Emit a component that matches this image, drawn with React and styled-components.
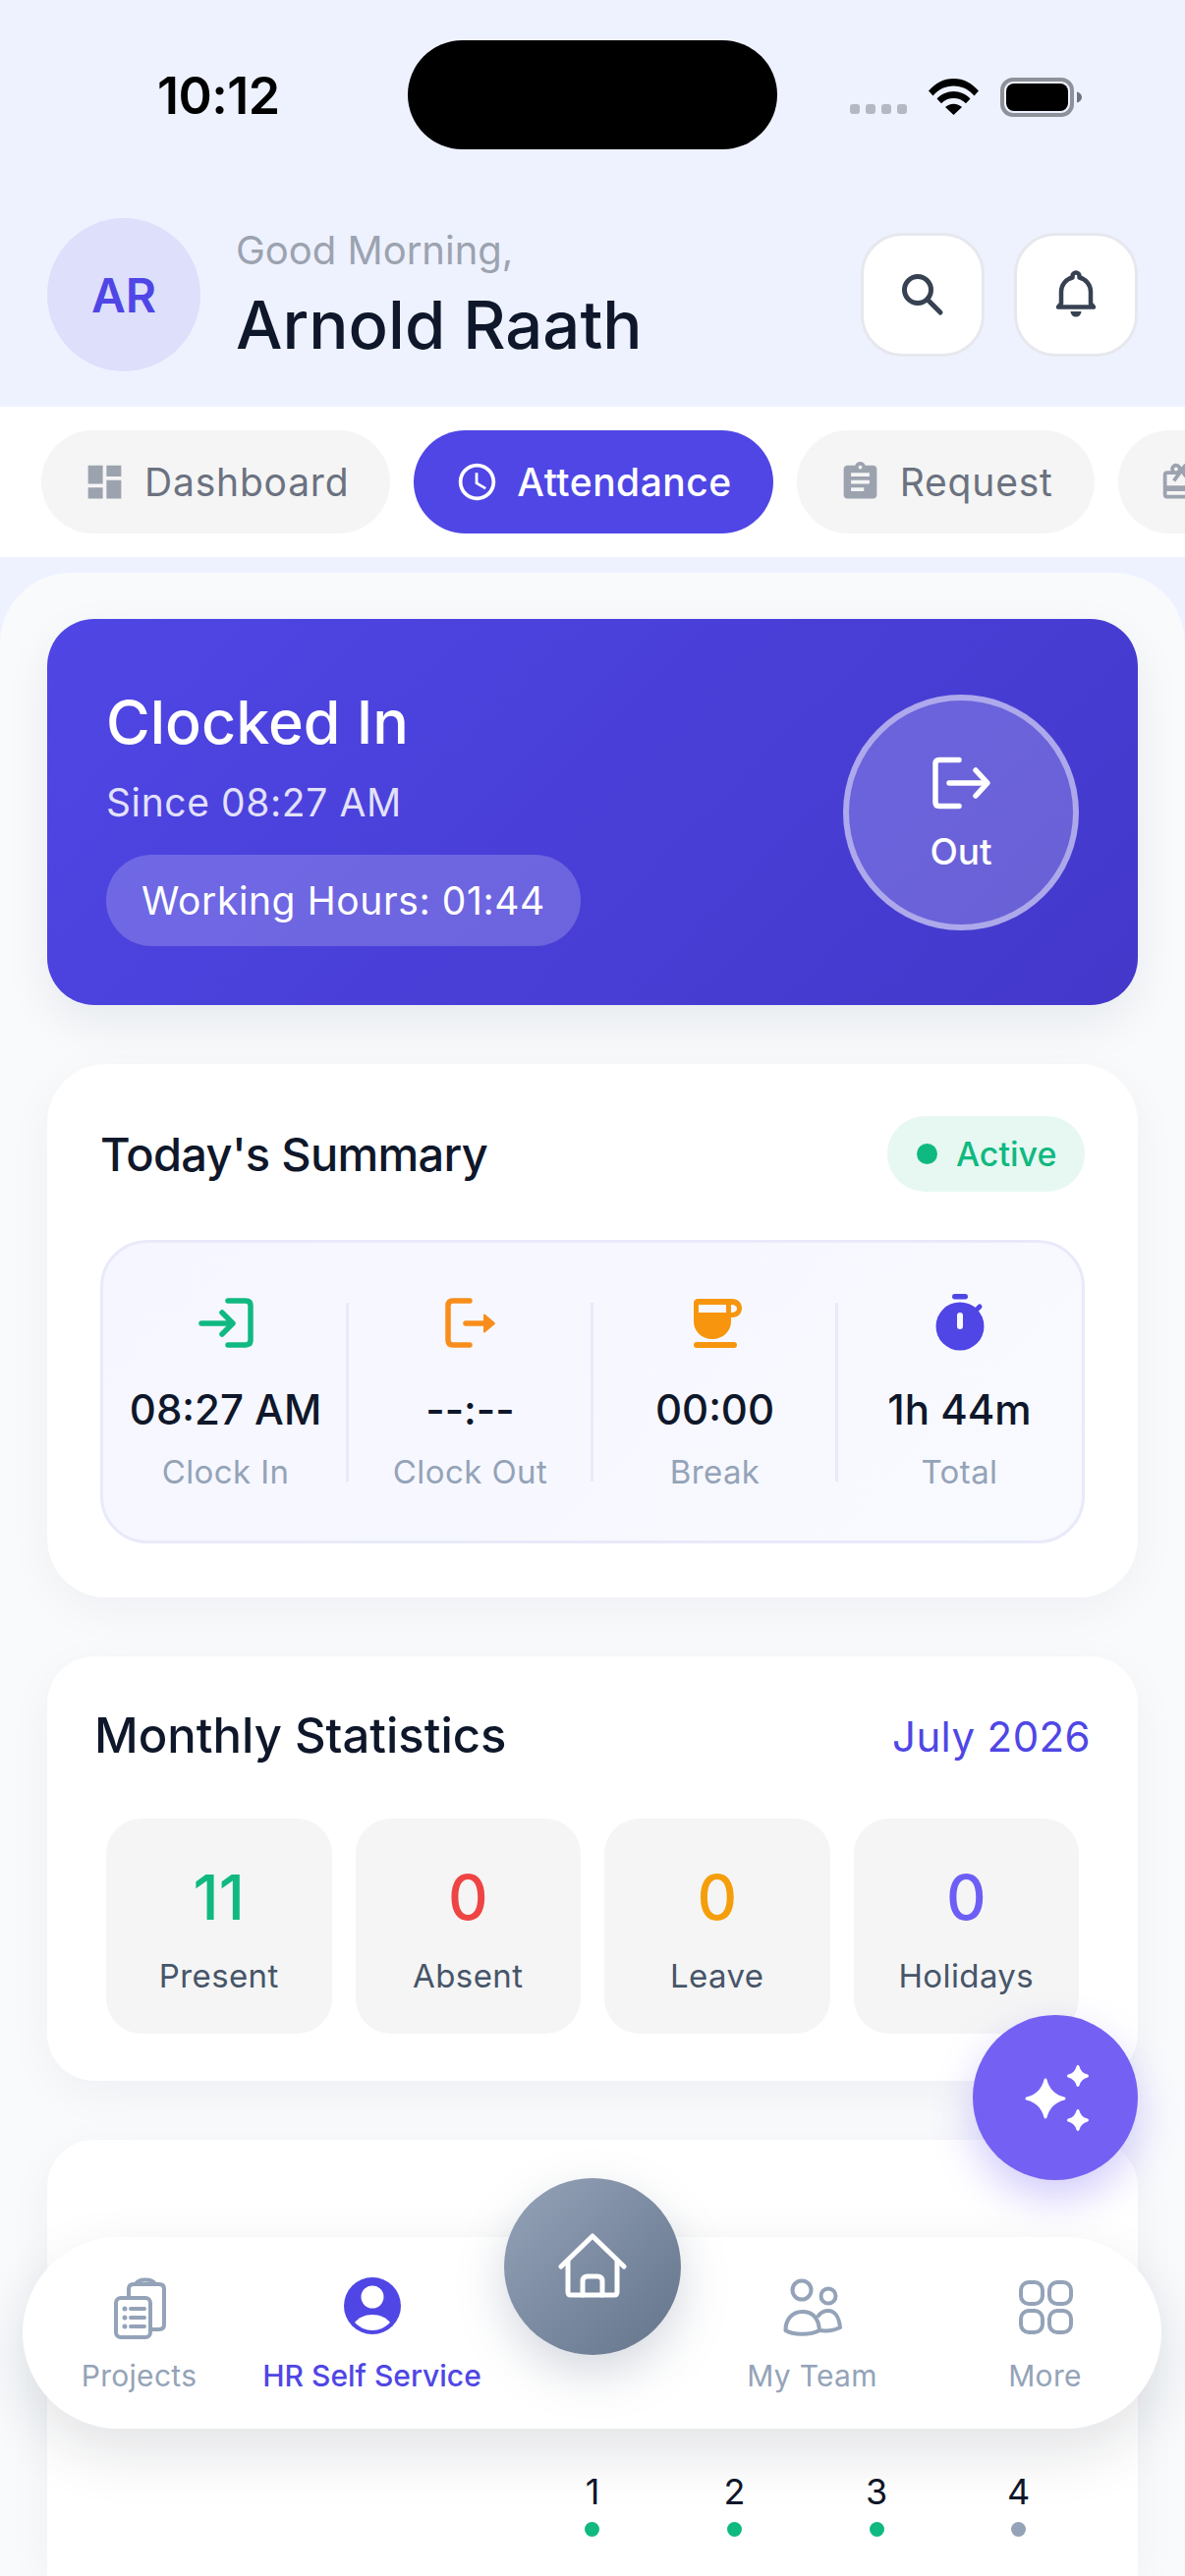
import React from "react";
import styled, { createGlobalStyle } from "styled-components";
import { MdDashboard, MdAccessTime, MdAssignment, MdCardGiftcard } from "react-icons/md";

const Global = createGlobalStyle`
  html, body { margin: 0; padding: 0; background: #eef2ff; }
  body { font-family: Inter, "Noto Sans", sans-serif; }
  * { box-sizing: border-box; }
`;

const Page = styled.div`
  position: relative;
  width: 1206px;
  height: 2622px;
  overflow: hidden;
  background: #eef2ff;
  display: flex;
  flex-direction: column;
`;

const StatusBar = styled.div`
  height: 222px;
  display: grid;
  grid-template-columns: 415px 376px 1fr;
  padding-top: 41px;
`;
const Time = styled.div`
  font-size: 52px;
  font-weight: 600;
  line-height: 58px;
  padding: 28px 0 0 160px;
  color: #000;
  letter-spacing: -0.5px;
`;
const Island = styled.div`
  height: 111px;
  border-radius: 56px;
  background: #000;
`;
const StatusIcons = styled.div`
  display: flex;
  align-items: flex-start;
  padding: 38px 0 0 74px;
`;
const SignalDots = styled.div`
  display: flex;
  gap: 6px;
  margin: 27px 22px 0 0;
`;
const SignalDot = styled.span`
  width: 10px;
  height: 10px;
  border-radius: 3px;
  background: #b4b8c2;
`;

const Header = styled.header`
  display: flex;
  align-items: center;
  padding: 0 48px 36px;
  height: 192px;
`;
const Avatar = styled.div`
  width: 156px;
  height: 156px;
  border-radius: 50%;
  background: #dddffb;
  color: #4f46e5;
  font-size: 48px;
  font-weight: 600;
  display: flex;
  align-items: center;
  justify-content: center;
  flex-shrink: 0;
`;
const Greeting = styled.div`
  margin-left: 36px;
  flex: 1;
`;
const Hello = styled.div`
  font-size: 40px;
  line-height: 50px;
  color: #9ca3af;
`;
const Name = styled.div`
  font-size: 67px;
  line-height: 80px;
  font-weight: 500;
  color: #0f172a;
  margin-top: 11px;
`;
const HeaderActions = styled.div`
  display: flex;
  gap: 30px;
`;
const RoundButton = styled.div`
  width: 126px;
  height: 126px;
  border-radius: 42px;
  background: #fff;
  border: 3px solid #e7e8ee;
  display: flex;
  align-items: center;
  justify-content: center;
`;

const TabBar = styled.nav`
  height: 153px;
  background: #fff;
  display: flex;
  gap: 24px;
  padding: 24px 0 24px 42px;
  overflow: hidden;
`;
const Tab = styled.div`
  height: 105px;
  flex-shrink: 0;
  border-radius: 53px;
  padding: 0 42px;
  display: flex;
  align-items: center;
  gap: 18px;
  font-size: 39px;
  letter-spacing: ${(p) => (p.$active ? "0.5px" : "0.8px")};
  min-width: ${(p) => (p.$stub ? "200px" : "0")};
  background: ${(p) => (p.$active ? "#4f46e5" : "#f5f5f5")};
  color: ${(p) => (p.$active ? "#fff" : "#6b7280")};
  font-weight: ${(p) => (p.$active ? 500 : 400)};
  svg { color: ${(p) => (p.$active ? "#fff" : "#9ca3af")}; flex-shrink: 0; }
`;

const Panel = styled.main`
  margin-top: 16px;
  flex: 1;
  background: #f8fafc;
  border-radius: 72px 72px 0 0;
  padding: 47px 48px 0;
  display: flex;
  flex-direction: column;
  gap: 60px;
`;
const Hero = styled.section`
  height: 393px;
  flex-shrink: 0;
  border-radius: 48px;
  background: linear-gradient(135deg, #4f46e5, #4338ca);
  box-shadow: 0 18px 48px rgba(15, 23, 42, 0.07);
  display: flex;
  align-items: center;
  justify-content: space-between;
  padding: 0 60px;
  color: #fff;
`;
const HeroText = styled.div`
  padding-top: 9px;
`;
const HeroTitle = styled.div`
  font-size: 61px;
  line-height: 72px;
  font-weight: 500;
`;
const HeroSince = styled.div`
  font-size: 39px;
  line-height: 48px;
  margin-top: 22px;
  color: rgba(255, 255, 255, 0.85);
  letter-spacing: 0.6px;
`;
const HoursPill = styled.div`
  display: inline-flex;
  align-items: center;
  height: 93px;
  margin-top: 29px;
  padding: 0 36px;
  border-radius: 47px;
  background: rgba(255, 255, 255, 0.2);
  font-size: 39px;
  letter-spacing: 0.6px;
`;
const OutButton = styled.div`
  width: 240px;
  height: 240px;
  border-radius: 50%;
  background: rgba(255, 255, 255, 0.2);
  border: 6px solid rgba(255, 255, 255, 0.45);
  display: flex;
  flex-direction: column;
  align-items: center;
  justify-content: center;
  gap: 18px;
  padding-top: 3px;
  font-size: 37px;
  font-weight: 500;
  line-height: 44px;
`;

const Card = styled.section`
  flex-shrink: 0;
  background: #fff;
  box-shadow: 0 12px 48px rgba(15, 23, 42, 0.045);
`;
const SummaryCard = styled(Card)`
  height: 543px;
  border-radius: 60px;
  padding: 53px 54px 0;
`;
const CardHead = styled.div`
  display: flex;
  align-items: center;
  justify-content: space-between;
`;
const SummaryTitle = styled.h2`
  margin: 0;
  font-size: 47px;
  letter-spacing: -0.7px;
  font-weight: 500;
  color: #0f172a;
`;
const ActivePill = styled.div`
  height: 77px;
  width: 201px;
  padding-left: 30px;
  border-radius: 39px;
  background: #e6f8f1;
  color: #10b981;
  display: flex;
  align-items: center;
  gap: 19px;
  font-size: 34px;
  font-weight: 500;
`;
const ActiveDot = styled.span`
  width: 21px;
  height: 21px;
  border-radius: 50%;
  background: #10b981;
`;
const SummaryPanel = styled.div`
  margin-top: 49px;
  height: 309px;
  border: 3px solid #e8eafa;
  border-radius: 48px;
  background: linear-gradient(135deg, #f5f6ff, #f9faff);
  display: grid;
  grid-template-columns: repeat(4, 1fr);
  padding-top: 52px;
`;
const SummaryCell = styled.div`
  position: relative;
  display: flex;
  flex-direction: column;
  align-items: center;
  height: 191px;
  &:not(:last-child)::after {
    content: "";
    position: absolute;
    right: -1px;
    top: 9px;
    bottom: 0;
    width: 3px;
    background: #e8eafa;
  }
`;
const SummaryValue = styled.div`
  margin-top: 32px;
  font-size: 42px;
  line-height: 52px;
  font-weight: 500;
  color: #0f172a;
`;
const SummaryLabel = styled.div`
  margin-top: 17px;
  font-size: 33px;
  line-height: 40px;
  color: #94a3b8;
  letter-spacing: 0.4px;
`;

const MonthlyCard = styled(Card)`
  height: 432px;
  border-radius: 48px;
  padding: 48px 48px 0 48px;
`;
const MonthlyTitle = styled.h2`
  margin: 0;
  font-size: 49px;
  line-height: 66px;
  font-weight: 500;
  color: #0f172a;
`;
const MonthLabel = styled.div`
  font-size: 42px;
  color: #4f46e5;
  letter-spacing: 0.4px;
`;
const TileGrid = styled.div`
  display: grid;
  grid-template-columns: repeat(4, 1fr);
  gap: 24px;
  margin: 51px 12px 0 12px;
`;
const Tile = styled.div`
  height: 219px;
  border-radius: 36px;
  background: #f5f5f5;
  display: flex;
  flex-direction: column;
  align-items: center;
  padding-top: 45px;
`;
const TileValue = styled.div`
  font-size: 63px;
  line-height: 70px;
  font-weight: 500;
  color: ${(p) => p.$color};
`;
const TileLabel = styled.div`
  margin-top: 25px;
  font-size: 33px;
  line-height: 40px;
  color: #475569;
  letter-spacing: 0.4px;
`;

const CalendarCard = styled(Card)`
  flex: 1;
  border-radius: 48px 48px 0 0;
  padding: 336px 49px 0;
`;
const CalendarGrid = styled.div`
  display: grid;
  grid-template-columns: repeat(7, 1fr);
`;
const Day = styled.div`
  display: flex;
  flex-direction: column;
  align-items: center;
  font-size: 36px;
  line-height: 44px;
  color: #0f172a;
`;
const DayDot = styled.span`
  width: 15px;
  height: 15px;
  margin-top: 9px;
  border-radius: 50%;
  background: ${(p) => p.$color};
`;

const BottomNav = styled.nav`
  position: absolute;
  left: 23px;
  bottom: 150px;
  width: 1159px;
  height: 195px;
  border-radius: 98px;
  background: #fff;
  box-shadow: 0 24px 60px rgba(15, 23, 42, 0.12);
  display: grid;
  grid-template-columns: 237px 237px 211px 237px 237px;
  padding-top: 40px;
`;
const NavItem = styled.div`
  display: flex;
  flex-direction: column;
  align-items: center;
  gap: 17px;
  font-size: 30px;
  line-height: 36px;
  letter-spacing: ${(p) => (p.$active ? "0" : "0.3px")};
  font-weight: ${(p) => (p.$active ? 500 : 400)};
  color: ${(p) => (p.$active ? "#4f46e5" : "#94a3b8")};
`;
const NavIcon = styled.svg`
  display: block;
  width: 60px;
  height: 66px;
  fill: none;
  stroke: currentColor;
  stroke-width: 4;
  stroke-linecap: round;
  stroke-linejoin: round;
`;
const HomeButton = styled.div`
  position: absolute;
  left: 490px;
  top: -60px;
  width: 180px;
  height: 180px;
  border-radius: 50%;
  background: linear-gradient(135deg, #94a3b8, #64748b);
  box-shadow: 0 18px 48px rgba(100, 116, 139, 0.28);
  display: flex;
  align-items: center;
  justify-content: center;
`;
const Fab = styled.div`
  position: absolute;
  right: 48px;
  bottom: 403px;
  width: 168px;
  height: 168px;
  border-radius: 50%;
  background: #7461f3;
  box-shadow: 0 18px 42px rgba(116, 97, 243, 0.32);
  display: flex;
  align-items: center;
  justify-content: center;
`;

const SvgIcon = styled.svg`
  display: block;
  flex-shrink: 0;
`;

const star = (x, y, r) => {
  const k = r * 0.2;
  return `M${x} ${y - r}Q${x + k} ${y - k} ${x + r} ${y}Q${x + k} ${y + k} ${x} ${y + r}Q${x - k} ${y + k} ${x - r} ${y}Q${x - k} ${y - k} ${x} ${y - r}Z`;
};

const Stroke = { fill: "none", strokeLinecap: "round", strokeLinejoin: "round" };

const Wifi = () => (
  <SvgIcon width="51" height="38" viewBox="0 0 51 38">
    <path d="M0 13.5C7 5.5 15.5 1 25.5 1S44 5.5 51 13.5l-4.5 5C41 12 34 8.5 25.5 8.5S10 12 4.500 18.500Z" fill="#000" />
    <path d="M8.500 21.500C13 16.800 19 14 25.500 14s12.500 2.800 17 7.500l-4.500 4.800c-3.400-3.300-7.600-5.200-12.500-5.200s-9.100 1.900-12.500 5.200Z" fill="#000" />
    <path d="M17 30c2.200-2 5.200-3.300 8.500-3.300s6.300 1.300 8.500 3.300L25.500 38Z" fill="#000" />
  </SvgIcon>
);
const BatterySvg = styled(SvgIcon)`
  margin-left: 22px;
`;
const Battery = () => (
  <BatterySvg width="84" height="40" viewBox="0 0 84 40">
    <rect x="2" y="2" width="71" height="36" rx="11" fill="none" stroke="#8e9199" strokeWidth="4" />
    <rect x="6" y="6" width="63" height="28" rx="8" fill="#000" />
    <path d="M78 14.500c3 .5 5 3 5 5.500s-2 5-5 5.500Z" fill="#6b7280" />
  </BatterySvg>
);
const SearchIcon = () => (
  <SvgIcon width="48" height="48" viewBox="0 0 48 48" {...Stroke} stroke="#374151" strokeWidth="5">
    <circle cx="19" cy="19" r="13.500" />
    <path d="M29 29l13 13" />
  </SvgIcon>
);
const BellIcon = () => (
  <SvgIcon width="40" height="50" viewBox="0 0 40 50">
    <path d="M20 2.500a3.500 3.500 0 0 1 3.500 3.500v1.500C30 9 35 15 35 22v12l3 3.500H2L5 34V22C5 15 10 9 16.500 7.500V6A3.500 3.500 0 0 1 20 2.500Z" fill="none" stroke="#374151" strokeWidth="4.500" strokeLinejoin="round" />
    <path d="M14.500 42h11a5.500 5.500 0 0 1-11 0Z" fill="#374151" />
  </SvgIcon>
);
const OutIcon = () => (
  <SvgIcon width="62" height="60" viewBox="0 0 62 60" {...Stroke} stroke="#fff" strokeWidth="5.500">
    <path d="M29 6.500H9Q5 6.500 5 10.500V49.500Q5 53.500 9 53.500H29" />
    <path d="M19 30H57" />
    <path d="M46 17L58 30 46 43" />
  </SvgIcon>
);
const ClockInIcon = () => (
  <SvgIcon width="60" height="60" viewBox="0 0 60 60" {...Stroke} stroke="#10b981" strokeWidth="5.500">
    <path d="M32 7H50Q55 7 55 12V47Q55 52 50 52H32" />
    <path d="M5 30H36" />
    <path d="M26 19L37 30 26 41" />
  </SvgIcon>
);
const ClockOutIcon = () => (
  <SvgIcon width="60" height="60" viewBox="0 0 60 60" {...Stroke} stroke="#f98d1c" strokeWidth="5.500">
    <path d="M29 7H12Q7 7 7 12V47Q7 52 12 52H29" />
    <path d="M25 30H44" />
    <path d="M44 21.500L54 30 44 38.500Z" fill="#f98d1c" strokeWidth="2" />
  </SvgIcon>
);
const CoffeeIcon = () => (
  <SvgIcon width="60" height="60" viewBox="0 0 60 60">
    <path
      fillRule="evenodd"
      d="M12 5H47C53 5 57 9 57 14.500C57 20 53 24 47 24H46V28C46 38 38 46 27 46C16 46 8 38 8 28V9C8 7 10 5 12 5ZM13 11V19H41V11ZM46 11V19C50 19 52 17 52 15C52 13 50 11 46 11Z"
      fill="#f7960e"
    />
    <rect x="8" y="49" width="44" height="6" rx="3" fill="#f7960e" />
  </SvgIcon>
);
const StopwatchIcon = () => (
  <SvgIcon width="60" height="60" viewBox="0 0 60 60">
    <rect x="22" y="0" width="16" height="5.500" rx="2.750" fill="#4f46e5" />
    <path d="M46 17L50 13" stroke="#4f46e5" strokeWidth="5" strokeLinecap="round" />
    <circle cx="30" cy="33" r="24.500" fill="#4f46e5" />
    <rect x="27" y="19" width="6" height="17" rx="3" fill="#f8f9ff" />
  </SvgIcon>
);
const ProjectsIcon = () => (
  <NavIcon viewBox="0 0 60 66">
    <rect x="6" y="22" width="35" height="40" rx="5" />
    <path d="M19 21V13Q19 8 24 8H26M46 8H50Q55 8 55 13V49Q55 54 50 54H43" />
    <path d="M26 8Q28 3.500 36 3.500T46 8Z" />
    <path d="M21 33H35M21 42H35M21 51H35" />
    <path d="M15 33V33M15 42V42M15 51V51" strokeWidth="5" />
  </NavIcon>
);
const ProfileIcon = () => (
  <SvgIcon width="60" height="66" viewBox="0 0 60 66">
    <circle cx="30" cy="30" r="29" fill="#4f46e5" />
    <circle cx="30" cy="21" r="11.500" fill="#fff" />
    <path d="M12 47C16 42 22 39 30 39C38 39 44 42 48 47C43 52 37 55 30 55C23 55 17 52 12 47Z" fill="#fff" />
  </SvgIcon>
);
const TeamIcon = () => (
  <NavIcon viewBox="0 0 60 66">
    <circle cx="19" cy="14" r="9.500" />
    <circle cx="46" cy="20" r="7.500" />
    <path d="M2.500 55C2.500 44 9 36 19.500 36C30 36 36 42 37 55C28 60 10 60 2.500 55Z" />
    <path d="M36 40C39 36 43 35 46 35C53 35 57 42 58 52C52 55 44 56 37 55" />
  </NavIcon>
);
const MoreIcon = () => (
  <NavIcon viewBox="0 0 60 66">
    <rect x="5" y="6" width="22" height="22" rx="8" />
    <rect x="34" y="6" width="22" height="22" rx="8" />
    <rect x="5" y="35" width="22" height="22" rx="8" />
    <rect x="34" y="35" width="22" height="22" rx="8" />
  </NavIcon>
);
const HomeIcon = () => (
  <SvgIcon width="72" height="72" viewBox="0 0 72 72" {...Stroke} stroke="#fff" strokeWidth="5">
    <path d="M4 36L36 5 68 36" />
    <path d="M11 30V62Q11 65 14 65H58Q61 65 61 62V30" />
    <path d="M26 65V51Q26 46 31 46H41Q46 46 46 51V65" />
  </SvgIcon>
);
const SparkleIcon = () => (
  <SvgIcon width="84" height="84" viewBox="0 0 84 84" fill="#fff" stroke="#fff" strokeWidth="3" strokeLinejoin="round">
    <path d={star(32, 43, 19)} />
    <path d={star(65, 20, 9.500)} />
    <path d={star(65, 65, 9.500)} />
  </SvgIcon>
);

const summary = [
  { Icon: ClockInIcon, value: "08:27 AM", label: "Clock In" },
  { Icon: ClockOutIcon, value: "--:--", label: "Clock Out" },
  { Icon: CoffeeIcon, value: "00:00", label: "Break" },
  { Icon: StopwatchIcon, value: "1h 44m", label: "Total" },
];
const stats = [
  { value: "11", label: "Present", color: "#10b981" },
  { value: "0", label: "Absent", color: "#ef4444" },
  { value: "0", label: "Leave", color: "#f59e0b" },
  { value: "0", label: "Holidays", color: "#6d5ef5" },
];
const days = [
  { n: 1, color: "#10b981" },
  { n: 2, color: "#10b981" },
  { n: 3, color: "#10b981" },
  { n: 4, color: "#94a3b8" },
];

export default function App() {
  return (
    <Page>
      <Global />
      <StatusBar>
        <Time>10:12</Time>
        <Island />
        <StatusIcons>
          <SignalDots>
            <SignalDot /><SignalDot /><SignalDot /><SignalDot />
          </SignalDots>
          <Wifi />
          <Battery />
        </StatusIcons>
      </StatusBar>
      <Header>
        <Avatar>AR</Avatar>
        <Greeting>
          <Hello>Good Morning,</Hello>
          <Name>Arnold Raath</Name>
        </Greeting>
        <HeaderActions>
          <RoundButton><SearchIcon /></RoundButton>
          <RoundButton><BellIcon /></RoundButton>
        </HeaderActions>
      </Header>
      <TabBar>
        <Tab><MdDashboard size={45} />Dashboard</Tab>
        <Tab $active><MdAccessTime size={45} />Attendance</Tab>
        <Tab><MdAssignment size={45} />Request</Tab>
        <Tab $stub><MdCardGiftcard size={45} /></Tab>
      </TabBar>
      <Panel>
        <Hero>
          <HeroText>
            <HeroTitle>Clocked In</HeroTitle>
            <HeroSince>Since 08:27 AM</HeroSince>
            <HoursPill>Working Hours: 01:44</HoursPill>
          </HeroText>
          <OutButton>
            <OutIcon />
            Out
          </OutButton>
        </Hero>
        <SummaryCard>
          <CardHead>
            <SummaryTitle>Today's Summary</SummaryTitle>
            <ActivePill><ActiveDot />Active</ActivePill>
          </CardHead>
          <SummaryPanel>
            {summary.map(({ Icon, value, label }) => (
              <SummaryCell key={label}>
                <Icon />
                <SummaryValue>{value}</SummaryValue>
                <SummaryLabel>{label}</SummaryLabel>
              </SummaryCell>
            ))}
          </SummaryPanel>
        </SummaryCard>
        <MonthlyCard>
          <CardHead>
            <MonthlyTitle>Monthly Statistics</MonthlyTitle>
            <MonthLabel>July 2026</MonthLabel>
          </CardHead>
          <TileGrid>
            {stats.map((s) => (
              <Tile key={s.label}>
                <TileValue $color={s.color}>{s.value}</TileValue>
                <TileLabel>{s.label}</TileLabel>
              </Tile>
            ))}
          </TileGrid>
        </MonthlyCard>
        <CalendarCard>
          <CalendarGrid>
            <span /><span /><span />
            {days.map((d) => (
              <Day key={d.n}>
                {d.n}
                <DayDot $color={d.color} />
              </Day>
            ))}
          </CalendarGrid>
        </CalendarCard>
      </Panel>
      <Fab><SparkleIcon /></Fab>
      <BottomNav>
        <NavItem><ProjectsIcon />Projects</NavItem>
        <NavItem $active><ProfileIcon />HR Self Service</NavItem>
        <span />
        <NavItem><TeamIcon />My Team</NavItem>
        <NavItem><MoreIcon />More</NavItem>
        <HomeButton><HomeIcon /></HomeButton>
      </BottomNav>
    </Page>
  );
}
